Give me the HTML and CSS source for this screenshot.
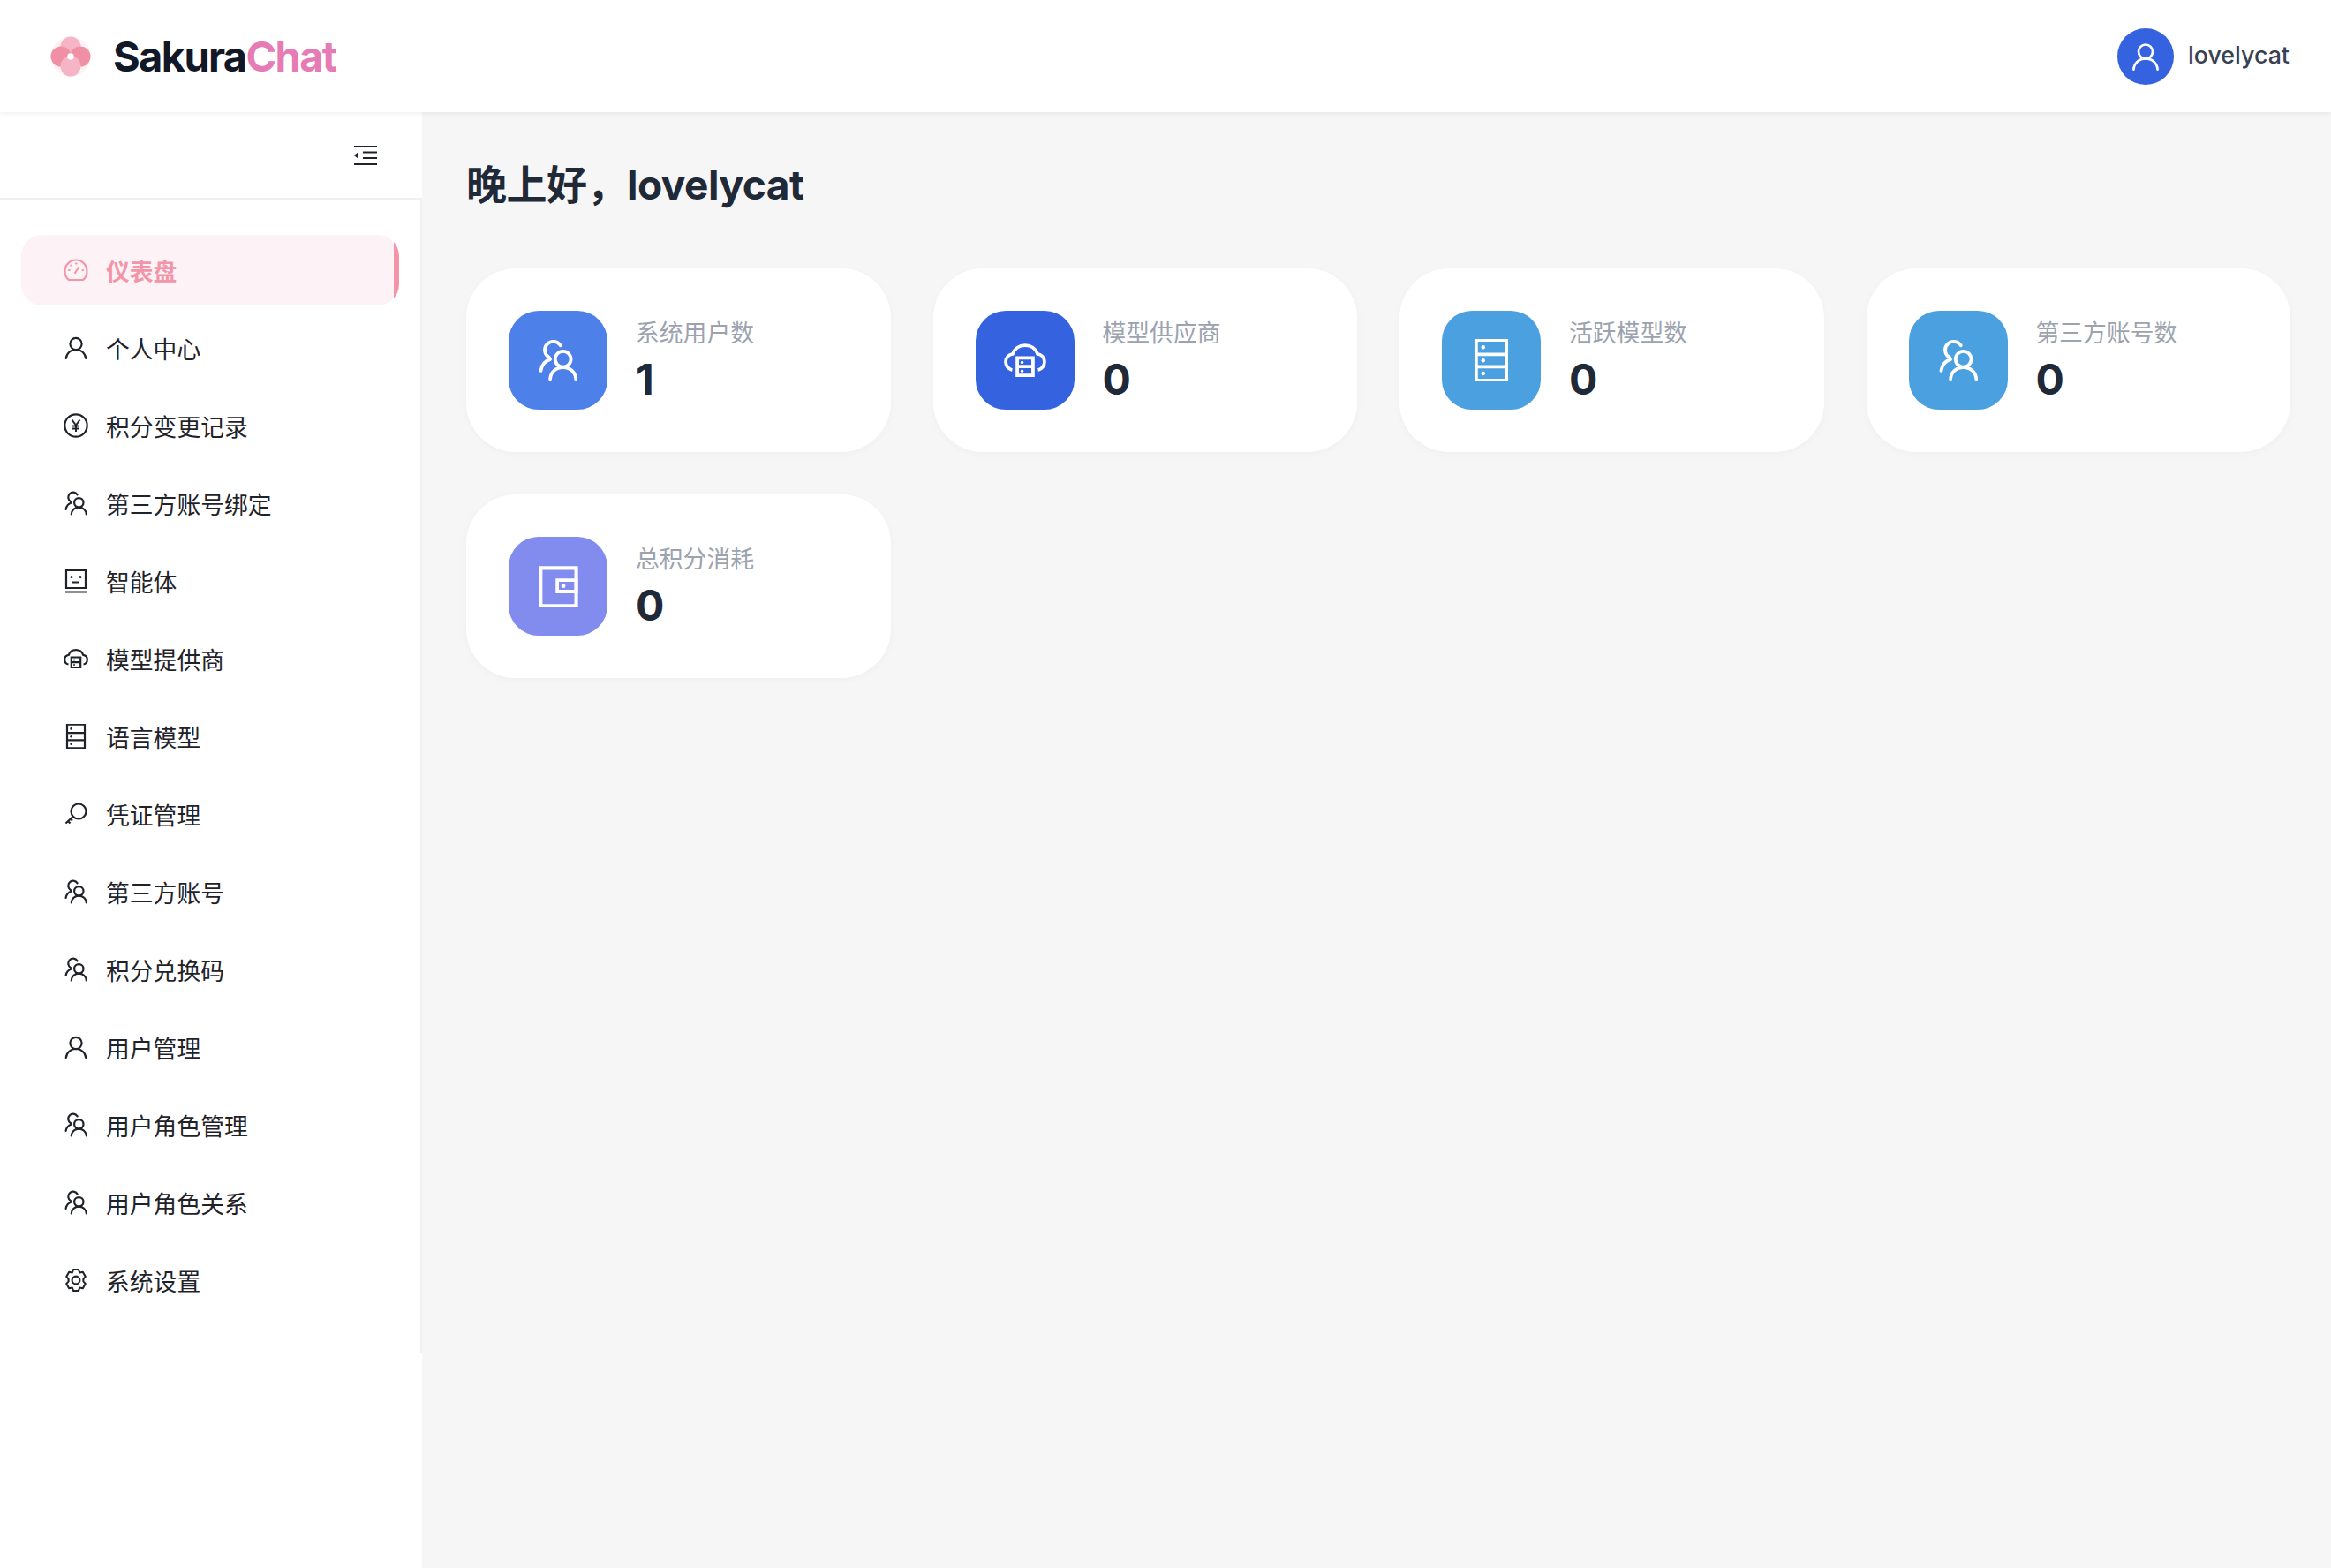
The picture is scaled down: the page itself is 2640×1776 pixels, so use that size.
FILE: index.html
```html
<!DOCTYPE html>
<html lang="zh-CN">
<head>
    <meta charset="UTF-8">
    <title>SakuraChat</title>
    <link rel="stylesheet" href="styles.css">
</head>
<body>
    <svg class="icon-defs" width="0" height="0">
        <symbol id="i-user" viewBox="0 0 28 28"><g fill="none" stroke="currentColor" stroke-width="2.2" stroke-linecap="round"><circle cx="14" cy="9.5" r="6.6"/><path d="M2.8 26c.6-6 5.2-10 11.2-10s10.600 4 11.200 10"/></g></symbol>
        <symbol id="i-users" viewBox="0 0 28 28"><g fill="none" stroke="currentColor" stroke-width="2.200" stroke-linecap="round"><circle cx="17.300" cy="13.300" r="5.200"/><path d="M8.800 26.500c.3-4.800 4-7.800 8.500-7.800s8.200 3 8.500 7.800"/><path d="M15.600 4.300A5.600 5.600 0 1 0 8.200 12.200"/><path d="M8.800 13.500C5.400 14.500 3.200 17.300 2.600 20.900"/></g></symbol>
        <symbol id="i-yen" viewBox="0 0 28 28"><circle cx="14" cy="14" r="12.700" fill="none" stroke="currentColor" stroke-width="2.200"/><path d="M9.500 7.500l4.500 6 4.500-6M14 13.500V21M10 14.500h8M10 17.500h8" fill="none" stroke="currentColor" stroke-width="2"/></symbol>
        <symbol id="i-agent" viewBox="0 0 28 28"><path d="M3 2h22v20H3zM2 26.500h24M10 15.500h8" fill="none" stroke="currentColor" stroke-width="2.200"/><circle cx="9" cy="9.500" r="1.500" fill="currentColor"/><circle cx="19" cy="9.500" r="1.500" fill="currentColor"/></symbol>
        <symbol id="i-cloud" viewBox="0 0 28 28"><path d="M5.500 20.500C2.800 20 1.200 17.500 1.200 15c0-2.800 2-4.800 4.600-5.200C7 6.500 10 4.200 14 4.200s7 2.300 8.200 5.600c2.600.4 4.600 2.400 4.600 5.200 0 2.500-1.600 5-4.300 5.500" fill="none" stroke="currentColor" stroke-width="2.200"/><path d="M8.800 12.500h10.400v11.500H8.800zM8.800 18.200h10.400" fill="none" stroke="currentColor" stroke-width="2.200"/><circle cx="12" cy="15.400" r="1" fill="currentColor"/><circle cx="12" cy="21.100" r="1" fill="currentColor"/></symbol>
        <symbol id="i-db" viewBox="0 0 28 28"><path d="M4 .7h20v26.700H4zM4 10.200h20M4 18.300h20" fill="none" stroke="currentColor" stroke-width="2.200"/><circle cx="8.600" cy="5.400" r="1.300" fill="currentColor"/><circle cx="8.600" cy="14.200" r="1.300" fill="currentColor"/><circle cx="8.600" cy="22.800" r="1.300" fill="currentColor"/></symbol>
        <symbol id="i-key" viewBox="0 0 28 28"><circle cx="17" cy="11" r="8.500" fill="none" stroke="currentColor" stroke-width="2.200"/><path d="M10.500 17l-8 7.500M5 22l2.500 2.500M8 19.500l2 2" fill="none" stroke="currentColor" stroke-width="2.200"/></symbol>
        <symbol id="i-gear" viewBox="0 0 28 28"><g fill="none" stroke="currentColor" stroke-width="2.100" stroke-linejoin="round"><path d="M11 2h6l1.200 3.500 3.600-.8 3 5.200-2.400 2.700 0 2.800 2.400 2.700-3 5.200-3.600-.8L17 26h-6l-1.200-3.500-3.600.8-3-5.200 2.400-2.700 0-2.800-2.400-2.700 3-5.200 3.600.8z"/><circle cx="14" cy="14" r="4.400"/></g></symbol>
        <symbol id="i-gauge" viewBox="0 0 28 28"><g fill="none" stroke="currentColor" stroke-width="2.200" stroke-linecap="round"><path d="M6 25C3.300 23 1.500 19.500 1.500 15.500 1.500 8 7 2.500 14 2.500S26.500 8 26.500 15.500c0 4-1.800 7.500-4.500 9.500z"/><path d="M13 17l4-6M6 14h.5M8.500 8.500h.5M14 6.500h.5M21.500 14h.5"/></g></symbol>
        <symbol id="i-wallet" viewBox="0 0 28 28"><path d="M2.500 2h23.500v25H2.500z" fill="none" stroke="currentColor" stroke-width="2.400"/><path d="M13.500 10h12.500v7.500H13.500z" fill="none" stroke="currentColor" stroke-width="2.200"/><circle cx="17.500" cy="13.800" r="1.400" fill="currentColor"/></symbol>
    </svg>

    <header class="topbar">
        <div class="brand">
            <svg class="brand-mark" viewBox="0 0 46 46">
                <circle cx="23" cy="23" r="22.500" fill="#fdf3f5"/>
                <circle cx="23" cy="12" r="11.500" fill="#f5b5c6"/>
                <circle cx="34" cy="23" r="11.500" fill="#f18fa4"/>
                <circle cx="12" cy="23" r="11.500" fill="#f18fa4"/>
                <circle cx="23" cy="34" r="11.500" fill="#f5b5c6"/>
                <circle cx="23" cy="23" r="3.800" fill="#fff"/>
            </svg>
            <span class="brand-name">Sakura<span class="brand-accent">Chat</span></span>
        </div>
        <div class="account">
            <span class="avatar"><svg class="avatar-icon"><use href="#i-user"/></svg></span>
            <span class="account-name">lovelycat</span>
        </div>
    </header>

    <div class="layout">
        <aside class="sidebar">
            <div class="sidebar-toggle">
                <svg class="toggle-icon" viewBox="0 0 26 22"><path d="M0 1h26M10 7.500h16M10 14h16M0 21h26" fill="none" stroke="#1f2329" stroke-width="2"/><path d="M0 11l5-4v8z" fill="#1f2329"/></svg>
            </div>
            <nav class="menu">
                <a class="menu-item active"><svg class="menu-icon"><use href="#i-gauge"/></svg>仪表盘</a>
                <a class="menu-item"><svg class="menu-icon"><use href="#i-user"/></svg>个人中心</a>
                <a class="menu-item"><svg class="menu-icon"><use href="#i-yen"/></svg>积分变更记录</a>
                <a class="menu-item"><svg class="menu-icon"><use href="#i-users"/></svg>第三方账号绑定</a>
                <a class="menu-item"><svg class="menu-icon"><use href="#i-agent"/></svg>智能体</a>
                <a class="menu-item"><svg class="menu-icon"><use href="#i-cloud"/></svg>模型提供商</a>
                <a class="menu-item"><svg class="menu-icon"><use href="#i-db"/></svg>语言模型</a>
                <a class="menu-item"><svg class="menu-icon"><use href="#i-key"/></svg>凭证管理</a>
                <a class="menu-item"><svg class="menu-icon"><use href="#i-users"/></svg>第三方账号</a>
                <a class="menu-item"><svg class="menu-icon"><use href="#i-users"/></svg>积分兑换码</a>
                <a class="menu-item"><svg class="menu-icon"><use href="#i-user"/></svg>用户管理</a>
                <a class="menu-item"><svg class="menu-icon"><use href="#i-users"/></svg>用户角色管理</a>
                <a class="menu-item"><svg class="menu-icon"><use href="#i-users"/></svg>用户角色关系</a>
                <a class="menu-item"><svg class="menu-icon"><use href="#i-gear"/></svg>系统设置</a>
            </nav>
        </aside>

        <main class="content">
            <h1 class="greeting">晚上好，lovelycat</h1>
            <section class="stats">
                <div class="stat-card">
                    <span class="stat-icon bg-blue"><svg><use href="#i-users"/></svg></span>
                    <div class="stat-text"><p class="stat-label">系统用户数</p><p class="stat-value">1</p></div>
                </div>
                <div class="stat-card">
                    <span class="stat-icon bg-indigo"><svg><use href="#i-cloud"/></svg></span>
                    <div class="stat-text"><p class="stat-label">模型供应商</p><p class="stat-value">0</p></div>
                </div>
                <div class="stat-card">
                    <span class="stat-icon bg-sky"><svg><use href="#i-db"/></svg></span>
                    <div class="stat-text"><p class="stat-label">活跃模型数</p><p class="stat-value">0</p></div>
                </div>
                <div class="stat-card">
                    <span class="stat-icon bg-sky"><svg><use href="#i-users"/></svg></span>
                    <div class="stat-text"><p class="stat-label">第三方账号数</p><p class="stat-value">0</p></div>
                </div>
                <div class="stat-card">
                    <span class="stat-icon bg-violet"><svg><use href="#i-wallet"/></svg></span>
                    <div class="stat-text"><p class="stat-label">总积分消耗</p><p class="stat-value">0</p></div>
                </div>
            </section>
        </main>
    </div>
</body>
</html>
```

FILE: styles.css
```css
* {
    box-sizing: border-box;
}
html, body {
    height: 100%;
}
body {
    margin: 0;
    display: flex;
    flex-direction: column;
    overflow: hidden;
    background-color: #f6f6f6;
    font-family: Inter, "Noto Sans CJK SC", sans-serif;
    color: #1f2937;
}
.icon-defs {
    position: absolute;
}

.topbar {
    position: relative;
    z-index: 2;
    flex: none;
    height: 127px;
    display: flex;
    align-items: center;
    justify-content: space-between;
    padding: 0 47px 0 57px;
    background-color: #fff;
    box-shadow: 0 2px 6px rgba(0, 0, 0, 0.06);
}
.brand {
    display: flex;
    align-items: center;
    gap: 25px;
}
.brand-mark {
    width: 46px;
    height: 46px;
}
.brand-name {
    font-size: 47px;
    font-weight: 700;
    letter-spacing: -1.650px;
    color: #111827;
}
.brand-accent {
    color: #e57cb5;
}
.account {
    display: flex;
    align-items: center;
    gap: 16px;
}
.avatar {
    width: 64px;
    height: 64px;
    display: flex;
    align-items: center;
    justify-content: center;
    border-radius: 50%;
    background-color: #3563e0;
    color: #fff;
}
.avatar-icon {
    width: 34px;
    height: 34px;
}
.account-name {
    padding-bottom: 3px;
    font-size: 26.800px;
    font-weight: 500;
    color: #374151;
}

.layout {
    flex: 1;
    display: flex;
    min-height: 0;
}
.sidebar {
    flex: none;
    width: 478px;
    background-color: #fff;
}
.sidebar-toggle {
    height: 99px;
    display: flex;
    align-items: center;
    justify-content: flex-end;
    padding-right: 51px;
    border-bottom: 2px solid #f0f0f0;
}
.toggle-icon {
    width: 26px;
    height: 22px;
}
.menu {
    height: 1306px;
    display: flex;
    flex-direction: column;
    gap: 8px;
    padding: 40px 0 0 24px;
    border-right: 2px solid #f0f0f0;
}
.menu-item {
    width: 428px;
    height: 80px;
    flex: none;
    display: flex;
    align-items: center;
    gap: 20px;
    padding-left: 48px;
    font-size: 26.800px;
    color: #1f2329;
    border-radius: 24px;
}
.menu-item.active {
    background: linear-gradient(to left, #f295a8 6px, #fdf2f5 6px);
    color: #f295a8;
    font-weight: 700;
}
.menu-icon {
    width: 28px;
    height: 28px;
    flex: none;
}

.content {
    flex: 1;
    padding: 47px 46px 0 50px;
}
.greeting {
    margin: 0 0 60px;
    font-size: 46px;
    line-height: 70px;
    font-weight: 700;
    letter-spacing: -0.500px;
    color: #1f2937;
}
.stats {
    display: grid;
    grid-template-columns: repeat(4, 1fr);
    gap: 48px;
}
.stat-card {
    height: 208px;
    display: flex;
    align-items: center;
    gap: 32px;
    padding: 0 48px;
    background-color: #fff;
    border-radius: 56px;
    box-shadow: 0 2px 8px rgba(0, 0, 0, 0.03);
}
.stat-icon {
    width: 112px;
    height: 112px;
    flex: none;
    display: flex;
    align-items: center;
    justify-content: center;
    border-radius: 34px;
    color: #fff;
}
.stat-icon svg {
    width: 48px;
    height: 48px;
}
.bg-blue {
    background-color: #4d80e9;
}
.bg-indigo {
    background-color: #3563e0;
}
.bg-sky {
    background-color: #4ba0e0;
}
.bg-violet {
    background-color: #828cee;
}
.stat-text p {
    margin: 0;
}
.stat-text .stat-label {
    margin-bottom: 4px;
    font-size: 26.800px;
    line-height: 40px;
    color: #9ca3af;
}
.stat-value {
    font-size: 48px;
    line-height: 58px;
    font-weight: 700;
    color: #1f2937;
}
```
